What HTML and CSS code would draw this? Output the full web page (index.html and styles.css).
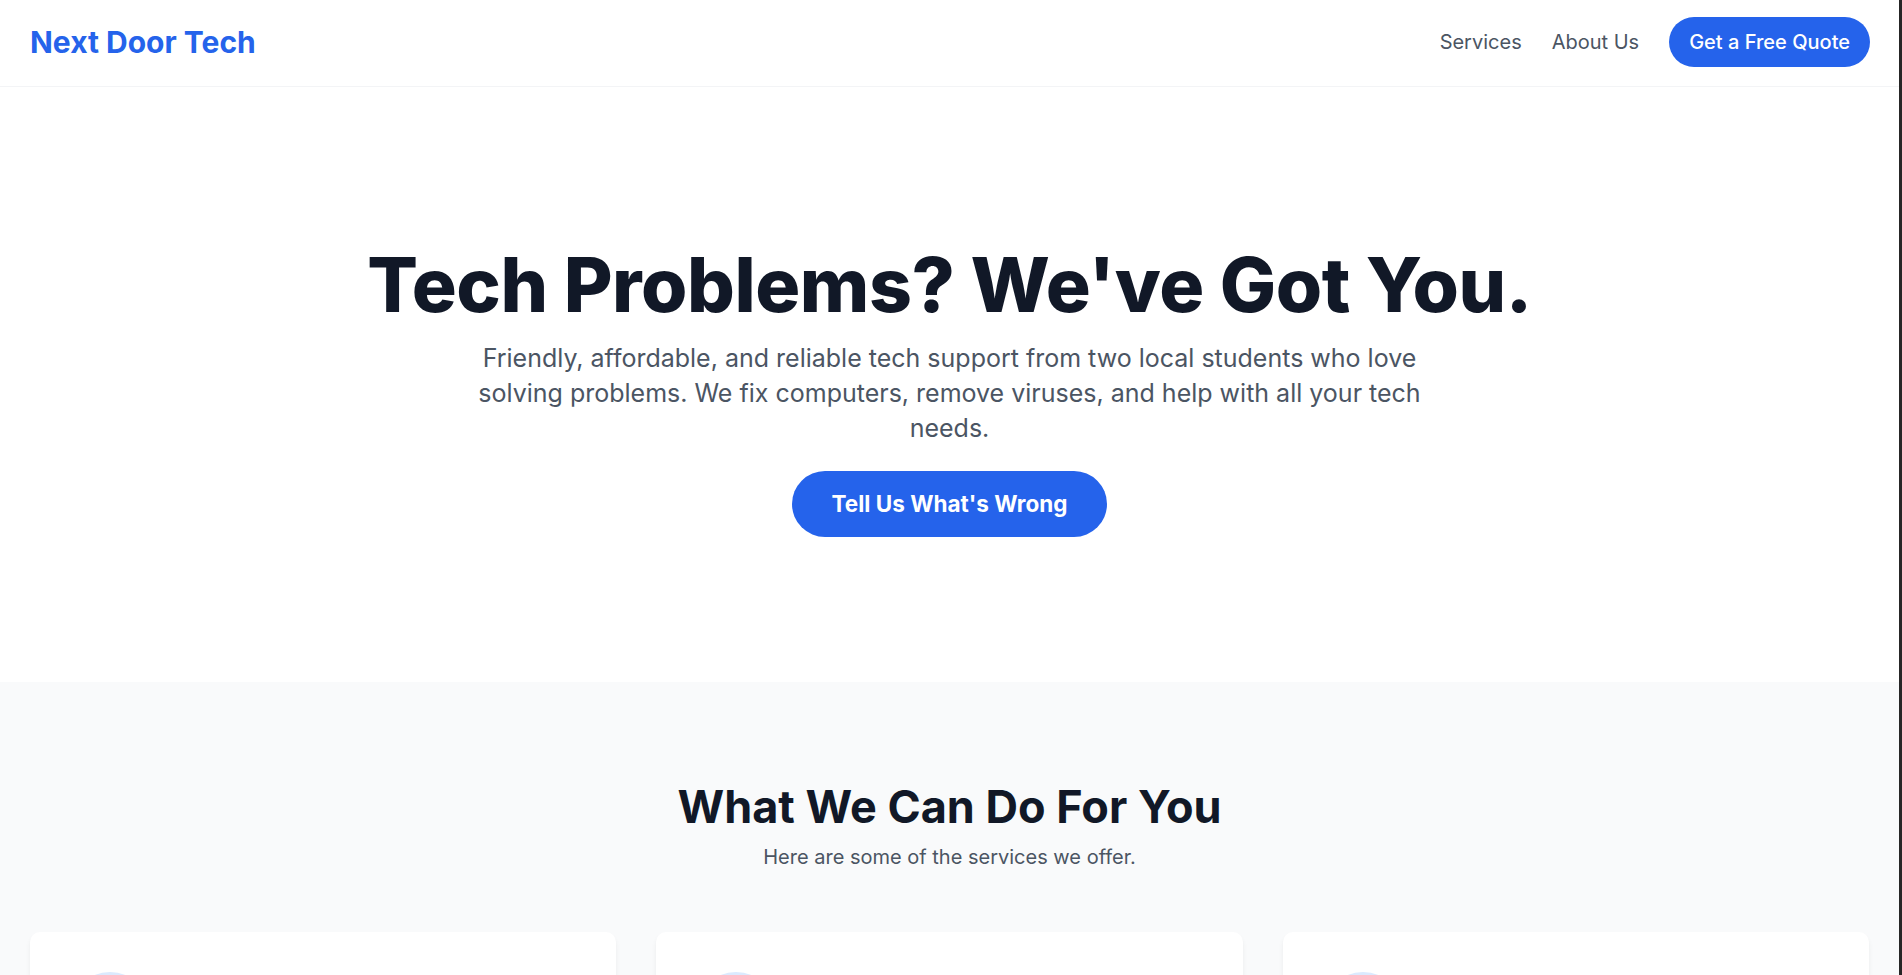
FILE: index.html
```html
<!DOCTYPE html>
<html lang="en">
<head>
<meta charset="utf-8">
<title>Next Door Tech</title>
<link rel="stylesheet" href="styles.css">
</head>
<body>
<div class="page">
  <header class="site-header">
    <a class="logo" href="#">Next Door Tech</a>
    <nav class="nav">
      <a class="nav-link" href="#services">Services</a>
      <a class="nav-link" href="#about">About Us</a>
      <a class="btn btn-small" href="#quote">Get a Free Quote</a>
    </nav>
  </header>

  <section class="hero">
    <h1 class="hero-title">Tech Problems? We've Got You.</h1>
    <p class="hero-text">Friendly, affordable, and reliable tech support from two local students who love solving problems. We fix computers, remove viruses, and help with all your tech needs.</p>
    <a class="btn btn-large" href="#quote">Tell Us What's Wrong</a>
  </section>

  <section class="services" id="services">
    <h2 class="section-title">What We Can Do For You</h2>
    <p class="section-sub">Here are some of the services we offer.</p>
    <div class="cards">
      <div class="card">
        <div class="card-icon">
          <svg viewBox="0 0 24 24" width="40" height="40" fill="none" stroke="#2563eb" stroke-width="2" stroke-linecap="round" stroke-linejoin="round"><rect x="2" y="3" width="20" height="14" rx="2"/><path d="M8 21h8M12 17v4"/></svg>
        </div>
        <h3 class="card-title">Computer Repair</h3>
        <p class="card-text">Slow computer? Hardware issues? We diagnose and fix laptops and desktops.</p>
      </div>
      <div class="card">
        <div class="card-icon">
          <svg viewBox="0 0 24 24" width="40" height="40" fill="none" stroke="#2563eb" stroke-width="2" stroke-linecap="round" stroke-linejoin="round"><path d="M12 22s8-4 8-10V5l-8-3-8 3v7c0 6 8 10 8 10z"/></svg>
        </div>
        <h3 class="card-title">Virus Removal</h3>
        <p class="card-text">We clean out malware and viruses and help keep your devices protected.</p>
      </div>
      <div class="card">
        <div class="card-icon">
          <svg viewBox="0 0 24 24" width="40" height="40" fill="none" stroke="#2563eb" stroke-width="2" stroke-linecap="round" stroke-linejoin="round"><circle cx="12" cy="12" r="10"/><path d="M9.1 9a3 3 0 0 1 5.8 1c0 2-3 3-3 3M12 17h.01"/></svg>
        </div>
        <h3 class="card-title">General Tech Help</h3>
        <p class="card-text">Setting up a printer, Wi-Fi, or a new phone? We're happy to help.</p>
      </div>
    </div>
  </section>
</div>
</body>
</html>
```

FILE: styles.css
```css
* { box-sizing: border-box; }

html, body {
  margin: 0;
  padding: 0;
  background: #262626;
}

body {
  font-family: Inter, "Noto Sans", "Liberation Sans", sans-serif;
  color: #111827;
}

a { text-decoration: none; }

.page {
  margin-right: 3px;
  background: #ffffff;
  min-height: 975px;
}

.site-header {
  display: flex;
  align-items: center;
  justify-content: space-between;
  padding: 17px 29px 19px 30px;
  background: #ffffff;
  border-bottom: 1px solid #f3f4f6;
  box-shadow: 0 1px 2px rgba(0, 0, 0, 0.03);
}

.logo {
  font-size: 30px;
  line-height: 40px;
  font-weight: 700;
  color: #2563eb;
}

.nav {
  display: flex;
  align-items: center;
  gap: 30px;
}

.nav-link {
  font-size: 20px;
  line-height: 30px;
  color: #4b5563;
}

.btn {
  display: inline-block;
  background: #2563eb;
  color: #ffffff;
  border-radius: 9999px;
}

.btn-small {
  font-size: 20px;
  line-height: 30px;
  font-weight: 500;
  padding: 10px 20px;
}

.hero {
  display: flex;
  flex-direction: column;
  align-items: center;
  text-align: center;
  padding: 160px 30px 145px;
  background: #ffffff;
}

.hero-title {
  margin: 0;
  font-size: 75px;
  line-height: 75px;
  font-weight: 800;
  letter-spacing: -0.006em;
  color: #111827;
}

.hero-text {
  margin: 19px 0 0;
  max-width: 960px;
  font-size: 25px;
  line-height: 35px;
  color: #4b5563;
}

.btn-large {
  margin-top: 25px;
  font-size: 22.5px;
  line-height: 36px;
  font-weight: 700;
  padding: 15px 40px;
}

.services {
  background: #f9fafb;
  padding: 100px 30px 100px;
  text-align: center;
}

.section-title {
  margin: 0;
  font-size: 45px;
  line-height: 50px;
  font-weight: 700;
  color: #111827;
}

.section-sub {
  margin: 10px 0 0;
  font-size: 20px;
  line-height: 30px;
  color: #4b5563;
}

.cards {
  margin-top: 60px;
  display: grid;
  grid-template-columns: repeat(3, 1fr);
  gap: 40px;
  text-align: left;
}

.card {
  background: #ffffff;
  border-radius: 10px;
  padding: 40px;
  box-shadow: 0 4px 6px -1px rgba(0, 0, 0, 0.07), 0 2px 4px -2px rgba(0, 0, 0, 0.05);
}

.card-icon {
  width: 80px;
  height: 80px;
  border-radius: 50%;
  background: #dbeafe;
  display: flex;
  align-items: center;
  justify-content: center;
  margin-bottom: 25px;
}

.card-title {
  margin: 0 0 10px;
  font-size: 25px;
  line-height: 35px;
  font-weight: 700;
  color: #111827;
}

.card-text {
  margin: 0;
  font-size: 20px;
  line-height: 30px;
  color: #4b5563;
}
```
